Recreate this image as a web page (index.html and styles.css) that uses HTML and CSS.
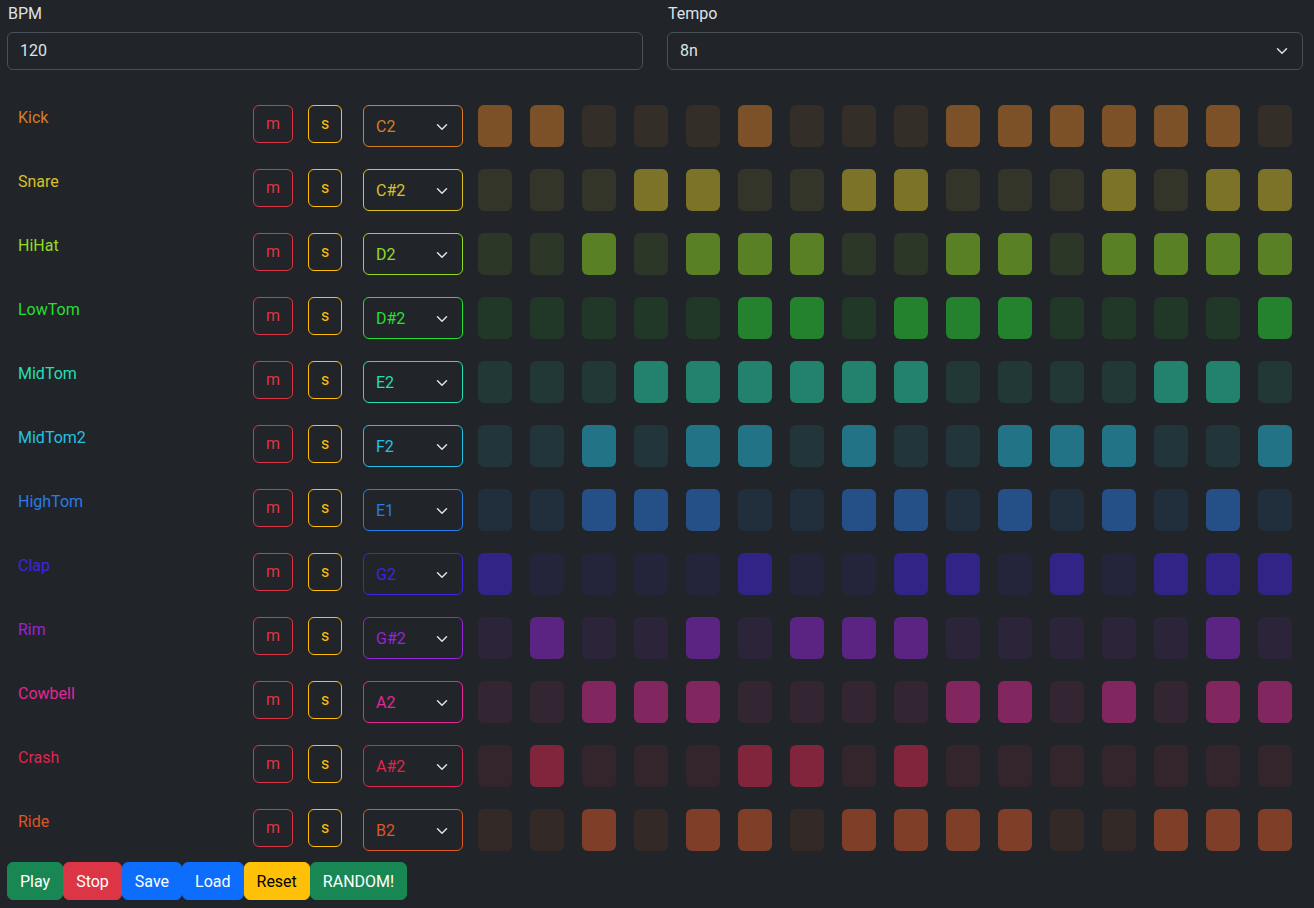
FILE: index.html
```html
<!DOCTYPE html>
<html lang="en">
<head>
<meta charset="utf-8">
<title>Drum Sequencer</title>
<link rel="stylesheet" href="styles.css">
</head>
<body>
<div class="page">
  <div class="settings">
    <div class="field">
      <label>BPM</label>
      <div class="control"><span>120</span></div>
    </div>
    <div class="field">
      <label>Tempo</label>
      <div class="control"><span>8n</span><svg class="chev" viewBox="0 0 16 16" width="16" height="12"><path d="m2 5 6 6 6-6"/></svg></div>
    </div>
  </div>

  <div class="tracks">
    <div class="track kick">
      <div class="name">Kick</div>
      <div class="col-m"><button class="btn-m">m</button></div>
      <div class="col-s"><button class="btn-s">s</button></div>
      <div class="col-note"><div class="note"><span>C2</span><svg class="chev" viewBox="0 0 16 16" width="16" height="12"><path d="m2 5 6 6 6-6"/></svg></div></div>
      <div class="steps"><span class="on"></span><span class="on"></span><span></span><span></span><span></span><span class="on"></span><span></span><span></span><span></span><span class="on"></span><span class="on"></span><span class="on"></span><span class="on"></span><span class="on"></span><span class="on"></span><span></span></div>
    </div>
    <div class="track snare">
      <div class="name">Snare</div>
      <div class="col-m"><button class="btn-m">m</button></div>
      <div class="col-s"><button class="btn-s">s</button></div>
      <div class="col-note"><div class="note"><span>C#2</span><svg class="chev" viewBox="0 0 16 16" width="16" height="12"><path d="m2 5 6 6 6-6"/></svg></div></div>
      <div class="steps"><span></span><span></span><span></span><span class="on"></span><span class="on"></span><span></span><span></span><span class="on"></span><span class="on"></span><span></span><span></span><span></span><span class="on"></span><span></span><span class="on"></span><span class="on"></span></div>
    </div>
    <div class="track hihat">
      <div class="name">HiHat</div>
      <div class="col-m"><button class="btn-m">m</button></div>
      <div class="col-s"><button class="btn-s">s</button></div>
      <div class="col-note"><div class="note"><span>D2</span><svg class="chev" viewBox="0 0 16 16" width="16" height="12"><path d="m2 5 6 6 6-6"/></svg></div></div>
      <div class="steps"><span></span><span></span><span class="on"></span><span></span><span class="on"></span><span class="on"></span><span class="on"></span><span></span><span></span><span class="on"></span><span class="on"></span><span></span><span class="on"></span><span class="on"></span><span class="on"></span><span class="on"></span></div>
    </div>
    <div class="track lowtom">
      <div class="name">LowTom</div>
      <div class="col-m"><button class="btn-m">m</button></div>
      <div class="col-s"><button class="btn-s">s</button></div>
      <div class="col-note"><div class="note"><span>D#2</span><svg class="chev" viewBox="0 0 16 16" width="16" height="12"><path d="m2 5 6 6 6-6"/></svg></div></div>
      <div class="steps"><span></span><span></span><span></span><span></span><span></span><span class="on"></span><span class="on"></span><span></span><span class="on"></span><span class="on"></span><span class="on"></span><span></span><span></span><span></span><span></span><span class="on"></span></div>
    </div>
    <div class="track midtom">
      <div class="name">MidTom</div>
      <div class="col-m"><button class="btn-m">m</button></div>
      <div class="col-s"><button class="btn-s">s</button></div>
      <div class="col-note"><div class="note"><span>E2</span><svg class="chev" viewBox="0 0 16 16" width="16" height="12"><path d="m2 5 6 6 6-6"/></svg></div></div>
      <div class="steps"><span></span><span></span><span></span><span class="on"></span><span class="on"></span><span class="on"></span><span class="on"></span><span class="on"></span><span class="on"></span><span></span><span></span><span></span><span></span><span class="on"></span><span class="on"></span><span></span></div>
    </div>
    <div class="track midtom2">
      <div class="name">MidTom2</div>
      <div class="col-m"><button class="btn-m">m</button></div>
      <div class="col-s"><button class="btn-s">s</button></div>
      <div class="col-note"><div class="note"><span>F2</span><svg class="chev" viewBox="0 0 16 16" width="16" height="12"><path d="m2 5 6 6 6-6"/></svg></div></div>
      <div class="steps"><span></span><span></span><span class="on"></span><span></span><span class="on"></span><span class="on"></span><span></span><span class="on"></span><span></span><span></span><span class="on"></span><span class="on"></span><span class="on"></span><span></span><span></span><span class="on"></span></div>
    </div>
    <div class="track hightom">
      <div class="name">HighTom</div>
      <div class="col-m"><button class="btn-m">m</button></div>
      <div class="col-s"><button class="btn-s">s</button></div>
      <div class="col-note"><div class="note"><span>E1</span><svg class="chev" viewBox="0 0 16 16" width="16" height="12"><path d="m2 5 6 6 6-6"/></svg></div></div>
      <div class="steps"><span></span><span></span><span class="on"></span><span class="on"></span><span class="on"></span><span></span><span></span><span class="on"></span><span class="on"></span><span></span><span class="on"></span><span></span><span class="on"></span><span></span><span class="on"></span><span></span></div>
    </div>
    <div class="track clap">
      <div class="name">Clap</div>
      <div class="col-m"><button class="btn-m">m</button></div>
      <div class="col-s"><button class="btn-s">s</button></div>
      <div class="col-note"><div class="note"><span>G2</span><svg class="chev" viewBox="0 0 16 16" width="16" height="12"><path d="m2 5 6 6 6-6"/></svg></div></div>
      <div class="steps"><span class="on"></span><span></span><span></span><span></span><span></span><span class="on"></span><span></span><span></span><span class="on"></span><span class="on"></span><span></span><span class="on"></span><span></span><span class="on"></span><span class="on"></span><span class="on"></span></div>
    </div>
    <div class="track rim">
      <div class="name">Rim</div>
      <div class="col-m"><button class="btn-m">m</button></div>
      <div class="col-s"><button class="btn-s">s</button></div>
      <div class="col-note"><div class="note"><span>G#2</span><svg class="chev" viewBox="0 0 16 16" width="16" height="12"><path d="m2 5 6 6 6-6"/></svg></div></div>
      <div class="steps"><span></span><span class="on"></span><span></span><span></span><span class="on"></span><span></span><span class="on"></span><span class="on"></span><span class="on"></span><span></span><span></span><span></span><span></span><span></span><span class="on"></span><span></span></div>
    </div>
    <div class="track cowbell">
      <div class="name">Cowbell</div>
      <div class="col-m"><button class="btn-m">m</button></div>
      <div class="col-s"><button class="btn-s">s</button></div>
      <div class="col-note"><div class="note"><span>A2</span><svg class="chev" viewBox="0 0 16 16" width="16" height="12"><path d="m2 5 6 6 6-6"/></svg></div></div>
      <div class="steps"><span></span><span></span><span class="on"></span><span class="on"></span><span class="on"></span><span></span><span></span><span></span><span></span><span class="on"></span><span class="on"></span><span></span><span class="on"></span><span></span><span class="on"></span><span class="on"></span></div>
    </div>
    <div class="track crash">
      <div class="name">Crash</div>
      <div class="col-m"><button class="btn-m">m</button></div>
      <div class="col-s"><button class="btn-s">s</button></div>
      <div class="col-note"><div class="note"><span>A#2</span><svg class="chev" viewBox="0 0 16 16" width="16" height="12"><path d="m2 5 6 6 6-6"/></svg></div></div>
      <div class="steps"><span></span><span class="on"></span><span></span><span></span><span></span><span class="on"></span><span class="on"></span><span></span><span class="on"></span><span></span><span></span><span></span><span></span><span></span><span></span><span></span></div>
    </div>
    <div class="track ride">
      <div class="name">Ride</div>
      <div class="col-m"><button class="btn-m">m</button></div>
      <div class="col-s"><button class="btn-s">s</button></div>
      <div class="col-note"><div class="note"><span>B2</span><svg class="chev" viewBox="0 0 16 16" width="16" height="12"><path d="m2 5 6 6 6-6"/></svg></div></div>
      <div class="steps"><span></span><span></span><span class="on"></span><span></span><span class="on"></span><span class="on"></span><span></span><span class="on"></span><span class="on"></span><span class="on"></span><span class="on"></span><span></span><span></span><span class="on"></span><span class="on"></span><span class="on"></span></div>
    </div>
  </div>

  <div class="toolbar">
    <button class="btn green">Play</button>
    <button class="btn red">Stop</button>
    <button class="btn blue">Save</button>
    <button class="btn blue">Load</button>
    <button class="btn yellow">Reset</button>
    <button class="btn green">RANDOM!</button>
  </div>
</div>
</body>
</html>
```

FILE: styles.css
```css
* { box-sizing: border-box; }

body {
  margin: 0;
  background: #212529;
  color: #dee2e6;
  font-family: "Segoe UI", Roboto, "Liberation Sans", sans-serif;
  font-size: 16px;
  line-height: 1.5;
}

.page {
  padding: 2px 11px 0 7px;
}

.settings {
  display: grid;
  grid-template-columns: 1fr 1fr;
  column-gap: 24px;
}

.field label {
  display: block;
  padding-left: 1px;
  margin-bottom: 6px;
}

.control {
  height: 38px;
  border: 1px solid #495057;
  border-radius: 6px;
  padding: 0 12px;
  display: flex;
  align-items: center;
  justify-content: space-between;
}

.chev {
  flex: none;
  fill: none;
  stroke: #dee2e6;
  stroke-width: 2;
  stroke-linecap: round;
  stroke-linejoin: round;
}

.tracks {
  margin-top: 35px;
  margin-left: 1px;
  display: flex;
  flex-direction: column;
  gap: 22px;
}

.track {
  display: flex;
  align-items: flex-start;
  color: rgb(var(--rgb));
}

.name {
  width: 245px;
  padding: 1px 0 0 10px;
}

.col-m, .col-s { width: 55px; }
.col-note { width: 115px; }

.btn-m, .btn-s {
  height: 38px;
  padding: 0 12px;
  border-radius: 6px;
  background: transparent;
  font: inherit;
  line-height: 1;
  cursor: pointer;
}

.btn-m { border: 1px solid #dc3545; color: #dc3545; }
.btn-s { border: 1px solid #ffc107; color: #ffc107; }

.note {
  width: 100px;
  height: 42px;
  border: 1px solid rgb(var(--rgb));
  border-radius: 6px;
  padding: 1px 12px 0 12px;
  display: flex;
  align-items: center;
  justify-content: space-between;
}

.steps {
  display: flex;
  gap: 18px;
}

.steps span {
  width: 34px;
  height: 42px;
  border-radius: 6px;
  background: rgb(var(--rgb) / 0.1);
}

.steps span.on {
  background: rgb(var(--rgb) / 0.5);
}

.kick    { --rgb: 217 125 37; }
.snare   { --rgb: 217 193 39; }
.hihat   { --rgb: 147 219 35; }
.lowtom  { --rgb: 39 223 51; }
.midtom  { --rgb: 37 223 179; }
.midtom2 { --rgb: 37 193 229; }
.hightom { --rgb: 41 123 229; }
.clap    { --rgb: 65 35 227; }
.rim     { --rgb: 151 35 219; }
.cowbell { --rgb: 227 39 149; }
.crash   { --rgb: 223 37 79; }
.ride    { --rgb: 219 87 37; }

.toolbar {
  margin-top: 11px;
  display: flex;
  gap: 0;
}

.btn {
  height: 38px;
  padding: 1px 12px 0 12px;
  border: 1px solid transparent;
  border-radius: 6px;
  font: inherit;
  line-height: 1;
  color: #fff;
  cursor: pointer;
}

.btn.green  { background: #198754; border-color: #198754; }
.btn.red    { background: #dc3545; border-color: #dc3545; }
.btn.blue   { background: #0d6efd; border-color: #0d6efd; }
.btn.yellow { background: #ffc107; border-color: #ffc107; color: #000; }
```
